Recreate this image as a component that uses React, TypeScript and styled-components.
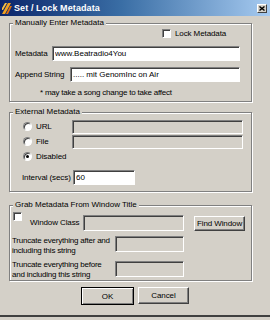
import React from "react";
import styled, { createGlobalStyle } from "styled-components";

const Global = createGlobalStyle`
  html, body { margin: 0; padding: 0; background: #d4d0c8; }
  body { font-family: "Liberation Sans", Arial, sans-serif; font-size: 8px; color: #000; }
`;

const Window = styled.div`
  width: 270px;
  height: 317px;
  box-sizing: border-box;
  background: #d4d0c8;
  border-bottom: 2px solid #404040;
  display: flex;
  flex-direction: column;
`;

const TitleBar = styled.div`
  height: 16px;
  display: flex;
  align-items: center;
  padding: 0 3px 0 2px;
  gap: 2px;
  background: linear-gradient(to right, #0a246a 0%, #3a6ea5 45%, #a6caf0 100%);
`;

const TitleText = styled.span`
  flex: 1;
  color: #fff;
  font-weight: bold;
  font-size: 9px;
  line-height: 16px;
  letter-spacing: 0.1px;
`;

const CloseBtn = styled.div`
  width: 10px;
  height: 9px;
  box-sizing: border-box;
  background: #d4d0c8;
  border: 1px solid;
  border-color: #fff #404040 #404040 #fff;
  display: flex;
  align-items: center;
  justify-content: center;
`;

const Body = styled.div`
  display: flex;
  flex-direction: column;
  padding: 2px 0 0 9px;
`;

const Group = styled.fieldset<{ $mt: number }>`
  margin: ${(p) => p.$mt}px 0 0 0;
  padding: 0;
  width: 243px;
  box-sizing: border-box;
  border: 1px solid #808080;
  box-shadow: 1px 1px 0 #fff, inset 1px 1px 0 #fff;
  display: flex;
  flex-direction: column;
`;

const Legend = styled.legend`
  margin-left: 3px;
  padding: 0 2px;
  line-height: 10px;
  background: #d4d0c8;
`;

const Row = styled.div<{ $mt?: number; $pl?: number; $h?: number; $top?: boolean }>`
  display: flex;
  align-items: ${(p) => (p.$top ? "flex-start" : "center")};
  margin-top: ${(p) => p.$mt ?? 0}px;
  padding-left: ${(p) => p.$pl ?? 0}px;
  height: ${(p) => (p.$h ? `${p.$h}px` : "auto")};
`;

const Label = styled.span<{ $w?: number; $ml?: number }>`
  display: inline-block;
  width: ${(p) => (p.$w ? `${p.$w}px` : "auto")};
  margin-left: ${(p) => p.$ml ?? 0}px;
  flex: none;
  line-height: 10px;
  white-space: nowrap;
  letter-spacing: -0.1px;
`;

const Text = styled.div<{ $w?: number }>`
  width: ${(p) => (p.$w ? `${p.$w}px` : "auto")};
  line-height: 10px;
  white-space: nowrap;
  letter-spacing: -0.22px;
  flex: none;
`;

const Field = styled.input<{ $w: number; $h?: number; $disabled?: boolean; $mt?: number }>`
  width: ${(p) => p.$w}px;
  height: ${(p) => p.$h ?? 15}px;
  box-sizing: border-box;
  margin: ${(p) => p.$mt ?? 0}px 0 0 0;
  padding: 0 0 0 2px;
  font-family: "Liberation Sans", Arial, sans-serif;
  font-size: 8px;
  color: #000;
  outline: none;
  background: ${(p) => (p.$disabled ? "#d4d0c8" : "#fff")};
  border: 1px solid;
  border-color: #808080 #fff #fff #808080;
  box-shadow: inset 1px 1px 0 #404040;
  flex: none;
`;

const Check = styled.span<{ $raise?: number }>`
  display: inline-block;
  width: 9px;
  height: 9px;
  box-sizing: border-box;
  background: #fff;
  border: 1px solid;
  border-color: #808080 #fff #fff #808080;
  box-shadow: inset 1px 1px 0 #404040;
  flex: none;
  ${(p) => (p.$raise ? `align-self: flex-start; margin-top: -${p.$raise}px;` : "")}
`;

const Radio = styled.span<{ $on?: boolean }>`
  display: inline-flex;
  align-items: center;
  justify-content: center;
  width: 9px;
  height: 9px;
  box-sizing: border-box;
  border-radius: 50%;
  background: #fff;
  border: 1px solid;
  border-color: #808080 #fff #fff #808080;
  box-shadow: inset 1px 1px 0 #404040;
  flex: none;
  &::after {
    content: "";
    width: 3px;
    height: 3px;
    border-radius: 50%;
    background: ${(p) => (p.$on ? "#000" : "transparent")};
  }
`;

const Button = styled.button<{ $w: number; $h?: number; $default?: boolean; $ml?: number }>`
  width: ${(p) => p.$w}px;
  height: ${(p) => p.$h ?? 18}px;
  box-sizing: border-box;
  margin: 0 0 0 ${(p) => p.$ml ?? 0}px;
  padding: 0;
  font-family: "Liberation Sans", Arial, sans-serif;
  font-size: 8px;
  letter-spacing: -0.1px;
  color: #000;
  background: #d4d0c8;
  border: 1px solid;
  border-color: ${(p) => (p.$default ? "#000" : "#fff #404040 #404040 #fff")};
  box-shadow: ${(p) =>
    p.$default
      ? "inset 1px 1px 0 #fff, inset -1px -1px 0 #808080"
      : "inset -1px -1px 0 #808080"};
  flex: none;
`;

const Buttons = styled.div`
  display: flex;
  justify-content: center;
  gap: 4px;
  margin-top: 6px;
  padding-right: 9px;
`;

const Spacer = styled.div<{ $h: number }>`
  height: ${(p) => p.$h}px;
`;

export default function App() {
  return (
    <>
      <Global />
      <Window>
        <TitleBar>
          <svg width="10" height="11" viewBox="0 0 10 11">
            <path d="M6 0 L9 0 L3 11 L0 11 Z" fill="#f0a020" />
            <path d="M8 3 L10 3 L6 11 L4 11 Z" fill="#e07010" />
            <path d="M3 0 L5 0 L1 7 L0 7 L0 5 Z" fill="#f8c040" />
          </svg>
          <TitleText>Set / Lock Metadata</TitleText>
          <CloseBtn>
            <svg width="6" height="5" viewBox="0 0 6 5">
              <path d="M0.5 0.5 L5.5 4.5 M5.5 0.5 L0.5 4.5" stroke="#000" strokeWidth="1.4" />
            </svg>
          </CloseBtn>
        </TitleBar>
        <Body>
          <Group $mt={0}>
            <Legend>Manually Enter Metadata</Legend>
            <Row $mt={1} $pl={152} $h={9}>
              <Check />
              <Label $ml={4}>Lock Metadata</Label>
            </Row>
            <Row $mt={8} $pl={5}>
              <Label $w={37}>Metadata</Label>
              <Field $w={188} readOnly value="www.Beatradio4You" />
            </Row>
            <Row $mt={6} $pl={5}>
              <Label $w={55}>Append String</Label>
              <Field $w={170} readOnly value="..... mit GenomInc on Air" />
            </Row>
            <Row $mt={6} $pl={30}>
              <Text>* may take a song change to take affect</Text>
            </Row>
            <Spacer $h={3} />
          </Group>

          <Group $mt={5}>
            <Legend>External Metadata</Legend>
            <Row $mt={2} $pl={13} $h={15}>
              <Radio />
              <Label $w={36} $ml={4}>URL</Label>
              <Field $w={171} $h={14} $disabled readOnly value="" />
            </Row>
            <Row $pl={13} $h={15}>
              <Radio />
              <Label $w={36} $ml={4}>File</Label>
              <Field $w={171} $h={14} $disabled readOnly value="" />
            </Row>
            <Row $pl={13} $h={15}>
              <Radio $on />
              <Label $ml={4}>Disabled</Label>
            </Row>
            <Row $mt={6} $pl={12}>
              <Label $w={51}>Interval (secs)</Label>
              <Field $w={62} readOnly value="60" />
            </Row>
            <Spacer $h={6} />
          </Group>

          <Group $mt={8}>
            <Legend>Grab Metadata From Window Title</Legend>
            <Row $mt={5} $pl={3}>
              <Check $raise={3} />
              <Label $w={53} $ml={8}>Window Class</Label>
              <Field $w={101} $h={16} $disabled readOnly value="" />
              <Button $w={51} $h={15} $ml={10}>Find Window</Button>
            </Row>
            <Row $mt={5} $pl={2} $top>
              <Text $w={103}>
                Truncate everything after and
                <br />
                including this string
              </Text>
              <Field $w={69} $h={16} $disabled readOnly value="" />
            </Row>
            <Row $mt={4} $pl={2} $top>
              <Text $w={103}>
                Truncate everything before
                <br />
                and including this string
              </Text>
              <Field $w={69} $h={16} $mt={1} $disabled readOnly value="" />
            </Row>
          </Group>

          <Buttons>
            <Button $w={53} $default>OK</Button>
            <Button $w={51} $h={17}>Cancel</Button>
          </Buttons>
        </Body>
      </Window>
    </>
  );
}
